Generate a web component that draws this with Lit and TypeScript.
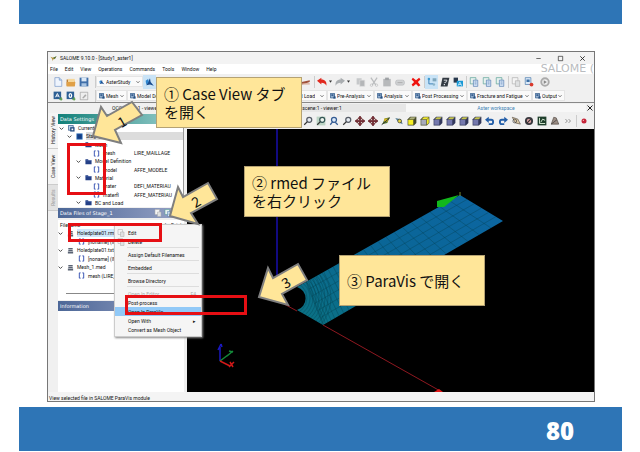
import { LitElement, html, svg, css } from "lit";
import { customElement } from "lit/decorators.js";
import { classMap } from "lit/directives/class-map.js";

const glyphs: Record<string, unknown> = {
  new: svg`<path d="M3 1h7l4 4v10H3z" fill="#eef4fd" stroke="#6c8fc4"/><path d="M10 1v4h4" fill="#bcd3f2" stroke="#6c8fc4"/>`,
  open: svg`<path d="M1 4h5l1 2h7v8H1z" fill="#b4742a"/><path d="M3 3h11v6H3z" fill="#f6d79a"/><path d="M1 8h14l-1 7H1z" fill="#e0a046"/>`,
  save: svg`<path d="M1 1h14v14H1z" fill="#3f6ea8"/><path d="M4 1h8v6H4z" fill="#dbe8f6"/><path d="M4 10h8v5H4z" fill="#a9c4e2"/>`,
  aster: svg`<path d="M2 13 8 2l1 6 5 6-6-2z" fill="#164b8f"/><path d="M1 6l4-3 1 5-4 4z" fill="#2f86cf"/>`,
  blob: svg`<circle cx="8" cy="8" r="6" fill="#8a8fa3"/><circle cx="8" cy="6" r="3" fill="#e9bd32"/>`,
  grid: svg`<path d="M1 1h14v14H1z" fill="#4d5e94"/><path d="M3 4h10M3 8h10M3 12h10" stroke="#dfe4f4" stroke-width="2"/>`,
  brown: svg`<path d="M1 8l13-3v3L2 12z" fill="#a1523a"/><path d="M2 10h12v2H2z" fill="#d8a894"/>`,
  undo: svg`<path d="M0 6l7-5v3c6 0 9 4 8 10-2-4-4-5-8-5v3z" fill="#e0281e"/>`,
  redo: svg`<path d="M16 6L9 1v3C3 4 0 8 1 14c2-4 4-5 8-5v3z" fill="#a9adb0"/>`,
  copy: svg`<path d="M1 2h8v10H1z" fill="#c6c8ca"/><path d="M6 5h8v10H6z" fill="#b4b6b8" stroke="#e2e2e2"/>`,
  cut: svg`<path d="M3 1l8 12M13 1L5 13" stroke="#babcbe" stroke-width="2"/><circle cx="4" cy="13" r="2" fill="none" stroke="#babcbe"/><circle cx="12" cy="13" r="2" fill="none" stroke="#babcbe"/>`,
  paste: svg`<path d="M2 3h12v12H2z" fill="#b7b9bb"/><path d="M5 1h6v4H5z" fill="#9fa2a5"/>`,
  pill: svg`<rect x="1" y="5" width="14" height="8" rx="3" fill="#d0d2d4" stroke="#b4b6b8"/><path d="M4 9h8" stroke="#999"/>`,
  del: svg`<path d="M3 1l5 4 5-4 2 3-4 4 4 5-3 2-4-4-5 4-2-3 4-4-4-4z" fill="#ee1410"/>`,
  tree: svg`<path d="M3 2v9h7" fill="none" stroke="#357db5" stroke-width="1.500"/><circle cx="3" cy="3" r="2" fill="#3c9ad0"/><path d="M9 2h6v5H9z" fill="#7fa7bd"/><circle cx="11" cy="12" r="2" fill="#8cb4c8"/>`,
  shade: svg`<path d="M4 1h11l-3 14H1z" fill="#333a42"/><path d="M6 5h5l-2 4H7" fill="none" stroke="#dfe3e6" stroke-width="1.500"/><path d="M6 11h2v2H6z" fill="#dfe3e6"/>`,
  lang: svg`<path d="M1 1h7v8H1z" fill="#28394d"/><path d="M6 6h10v9H6z" fill="#1999d6"/><path d="M8 14l3-6 3 6M9 12h4" stroke="#fff" fill="none"/>`,
  pageB: svg`<path d="M2 1h9v10H2z" fill="#e7f1ee" stroke="#4b9a8e"/><path d="M7 5h7v10H7z" fill="#d4e3f5" stroke="#4a74ab"/><path d="M9 8h3M9 11h3" stroke="#4a74ab"/>`,
  pageG: svg`<path d="M2 1h9v10H2z" fill="#f4f4f4" stroke="#aaa"/><path d="M7 6h7v9H7z" fill="#dfe1e2" stroke="#aaa"/>`,
  pageR: svg`<path d="M2 1h9v11H2z" fill="#dce9f7" stroke="#3a6ea5"/><path d="M4 4h5v4H4z" fill="#3a6ea5"/><circle cx="12" cy="12" r="3" fill="#d93a2d"/>`,
  play: svg`<circle cx="8" cy="8" r="6" fill="#eee" stroke="#aaa" stroke-width="3"/><path d="M6 5l5 3-5 3z" fill="#888"/>`,
  astA: svg`<path d="M1 1h12v12H1z" fill="#2d5f94"/><path d="M4 10l3-6 3 6M5 8h4" stroke="#fff" stroke-width="1.500" fill="none"/><path d="M13 10v5M10 13h5" stroke="#5a9b49" stroke-width="2"/>`,
  astO: svg`<path d="M1 1h12v12H1z" fill="#2d5f94"/><ellipse cx="7" cy="7" rx="2" ry="3" stroke="#fff" stroke-width="2" fill="none"/><path d="M13 10v5M10 13h5" stroke="#5a9b49" stroke-width="2"/>`,
  note: svg`<path d="M2 2h12v12H2z" fill="#eee" stroke="#999"/><path d="M5 11l5-6 2 2-5 5z" fill="#aaa"/>`,
  cmd: svg`<path d="M1 1h11v12H1z" fill="#b4cbe4" stroke="#244f80" stroke-width="2"/><path d="M4 4h5v3H4zM4 9h3" fill="#244f80" stroke="#244f80"/><path d="M9 9h6v6H9z" fill="#244f80"/>`,
  zoom: svg`<circle cx="10" cy="6" r="4" fill="#e8edf3" stroke="#555b66" stroke-width="2"/><path d="M7 9l-5 5" stroke="#333" stroke-width="2"/>`,
  zoomA: svg`<path d="M1 1h14v14H1z" fill="#bcd3c4"/><circle cx="10" cy="6" r="4" fill="#eef4ee" stroke="#355" stroke-width="2"/><path d="M7 9l-5 5" stroke="#333" stroke-width="2"/>`,
  zoomB: svg`<circle cx="8" cy="6" r="4" fill="#dae8f8" stroke="#345b93" stroke-width="2"/><path d="M6 9l-4 5M10 10l4 4" stroke="#345b93" stroke-width="2"/>`,
  move: svg`<path d="M8 0l3 4H9v3h3V5l4 3-4 3V9H9v3h2l-3 4-3-4h2V9H4v2L0 8l4-3v2h3V4H5z" fill="#7d2e3d" stroke="#511"/>`,
  rot: svg`<path d="M2 13l4-9 8-2-4 9z" fill="#4c702c"/><path d="M5 4h6v5H5z" fill="#d1b528"/><path d="M1 14l13-11" stroke="#333" stroke-width="1.500"/>`,
  rot2: svg`<path d="M2 3l9 2 3 8-7-3z" fill="#547d92"/><circle cx="9" cy="8" r="3" fill="#e6d544" stroke="#333"/>`,
  cubeY: svg`<path d="M1 5l4-4h10v10l-4 4H1z" fill="#454a2c"/><path d="M2 6h8v8H2z" fill="#f7ef25"/><path d="M3 5l3-3h8l-3 3z" fill="#aeb07c"/>`,
  cubeT: svg`<path d="M1 5l4-4h10v10l-4 4H1z" fill="#4e5230"/><path d="M2 6h8v8H2z" fill="#a6a9bc"/><path d="M3 5l3-3h8l-3 3zM11 6l3-3v8l-3 3z" fill="#efe72e"/>`,
  cubeB: svg`<path d="M1 5l4-4h10v10l-4 4H1z" fill="#33385c"/><path d="M2 6h8v8H2z" fill="#7478ad"/><path d="M3 5l3-3h8l-3 3z" fill="#c5c34e"/>`,
  ccw: svg`<path d="M5 6h5c4 0 4 7 0 7H6" fill="none" stroke="#235ea8" stroke-width="3"/><path d="M6 1v10L0 6z" fill="#235ea8"/>`,
  cw: svg`<path d="M11 6H6c-4 0-4 7 0 7h4" fill="none" stroke="#235ea8" stroke-width="3"/><path d="M10 1v10l6-5z" fill="#235ea8"/>`,
  clip: svg`<path d="M2 2l9 3 4 8-8-2z" fill="#d6c5a5" stroke="#554b40"/><circle cx="6" cy="8" r="3" fill="none" stroke="#333"/>`,
  gear: svg`<circle cx="8" cy="8" r="5" fill="#e0a5a5" stroke="#38383e" stroke-width="3"/><path d="M5 11l6-6" stroke="#333" stroke-width="2"/>`,
  graph: svg`<path d="M1 1h14v14H1z" fill="#1f3f2c"/><path d="M4 3v9h9M6 10l3-5 4 2" stroke="#d8ecd4" fill="none" stroke-width="1.500"/>`,
  cone: svg`<path d="M6 2l4 1 4 10H2z" fill="#9b8d85" stroke="#49413c"/><path d="M2 13l9-7" stroke="#333"/>`,
  dot: svg`<circle cx="8" cy="8" r="4" fill="#c6263a"/><circle cx="7" cy="7" r="1" fill="#f4b4b4"/>`,
  more: svg`<path d="M4 5l3 3-3 3M9 5l3 3-3 3" fill="none" stroke="#888" stroke-width="1.500"/>`,
  chev: svg`<path d="M2 5l6 6 6-6" fill="none" stroke="#444" stroke-width="3"/>`,
  tri: svg`<path d="M3 5h10l-5 7z" fill="#333"/>`,
  folder: svg`<path d="M1 3h6l1 2h7v9H1z" fill="#233f86"/><path d="M1 6h14" stroke="#5573b8"/>`,
  stage: svg`<path d="M1 1h14v14H1z" fill="#2467b4"/><path d="M3 3h10v10H3z" fill="#153d83"/>`,
  cases: svg`<path d="M1 1h11v11H1z" fill="#bdd2ea" stroke="#254d82" stroke-width="1.500"/><path d="M5 5h10v10H5z" fill="#254d82"/><path d="M8 8h4v4H8z" fill="#fff"/>`,
  brace: svg`<path d="M6 2H3v12h3M10 2h3v12h-3" fill="none" stroke="#2745ad" stroke-width="2"/>`,
  file: svg`<path d="M3 2h10v3H3zM3 6h10v3H3zM2 10h12v5H2z" fill="#596273"/>`,
  min: svg`<path d="M3 8h10" stroke="#222" stroke-width="1.500"/>`,
  max: svg`<path d="M3 3h10v10H3z" fill="none" stroke="#222" stroke-width="1.500"/>`,
  close: svg`<path d="M3 3l10 10M13 3L3 13" stroke="#222" stroke-width="2"/>`,
  logo: svg`<path d="M1 4l6 2 8-3-4 6-4 1-1 4-1-5z" fill="#b29039"/><path d="M7 6l8-3-4 6z" fill="#4e7544"/>`,
  none: svg``,
};

const icon = (name: string) =>
  html`<svg class="icon" viewBox="0 0 16 16" aria-hidden="true">${glyphs[name]}</svg>`;

const mainTools =
  "grid none none blob none grid blob open blob none graph brown | undo tri redo tri / copy cut paste pill / del | *tree shade lang | pageB pageB pageB | pageG pageR / play".split(" ");
const viewTools =
  "zoom zoom zoom move rot zoom zoom zoom zoom zoomA zoomB zoom move move rot rot2 cubeY cubeT cubeB cubeB cubeB cubeB ccw cw clip gear graph cone more | dot".split(" ");

const tool = (name: string) => {
  if (name === "|" || name === "/") return html`<span class=${classMap({ sep: true, line: name === "|" })}></span>`;
  const on = name.startsWith("*");
  const id = on ? name.slice(1) : name;
  return html`<button class=${classMap({ tool: true, on, thin: id === "tri" })} aria-label=${id}>${icon(id)}</button>`;
};

const combos = [
  ["Mesh", "c30"], ["Model Definition", "c62"], ["Material", "c62"], ["BC and Load", "c76 end"],
  ["Pre-Analysis", "c47"], ["Analysis", "c38"], ["Post Processing", "c55"],
  ["Fracture and Fatigue", "c65"], ["Output", "c33"],
];

const combo = (label: string, size: string, glyph = "cmd") => html`
  <label class="combo ${size}">${icon(glyph)}
    <select aria-label=${label}><option>${label}</option></select>
    ${icon("chev")}
  </label>`;

const settings: [number, string, string, string][] = [
  [0, "cases", "CurrentCase", ""],
  [1, "stage", "Stage_1", ""],
  [2, "folder", "Mesh", ""],
  [3, "brace", "mesh", "LIRE_MAILLAGE"],
  [2, "folder", "Model Definition", ""],
  [3, "brace", "model", "AFFE_MODELE"],
  [2, "folder", "Material", ""],
  [3, "brace", "mater", "DEFI_MATERIAU"],
  [3, "brace", "materfl", "AFFE_MATERIAU"],
  [2, "folder", "BC and Load", ""],
];

const files: [boolean, string][] = [
  [false, "Holedplate01.rmed"],
  [true, "[noname] (IMPR_RESU)"],
  [false, "Holedplate01.txt"],
  [true, "[noname] (IMPR_RESU)"],
  [false, "Mesh_1.med"],
  [true, "mesh (LIRE_MAILLAGE)"],
];

const meshLines = () => {
  const out: unknown[] = [];
  // across the strip, denser towards the hole
  for (let i = 0; i < 25; i++) {
    const t = Math.pow(i / 25, 1.7);
    out.push(svg`<path d="M${306 + 154 * t} ${281 - 87 * t}L${323 + 180 * t} ${324 - 104 * t}"/>`);
  }
  for (let i = 1; i < 6; i++) {
    const t = i / 6;
    out.push(svg`<path d="M${306 + 17 * t} ${281 + 43 * t}L${460 + 43 * t} ${194 + 26 * t}"/>`);
  }
  for (let r = 16; r < 42; r += 3) out.push(svg`<circle cx="291" cy="297" r=${r}/>`);
  return out;
};

@customElement("app-root")
export class AppRoot extends LitElement {
  static styles = css`
    :host { display: flex; flex-direction: column; min-height: 100vh; background: #fff; color: #111;
      font: 5px/8px "Roboto", "Liberation Sans", sans-serif; }
    * { box-sizing: border-box; }
    button, select { font: inherit; color: inherit; border: 0; padding: 0; margin: 0; background: none; }
    .band { background: #2e75b6; margin: 0 18px 0 19px; }
    .top { height: 24px; }
    .bottom { height: 44px; margin-bottom: 1px; padding: 4px 48px 0 0; display: flex; align-items: center;
      justify-content: flex-end; color: #fff; font: 800 24px/32px "Open Sans", "Noto Sans", sans-serif; }
    .shot { position: relative; flex: 1; display: flex; margin: 27px 45px 5px 47px; }
    .app { flex: 1; min-width: 0; display: flex; flex-direction: column; border: 1px solid #777; background: #f0f0f0; overflow: hidden; }
    .icon { width: 10px; height: 10px; flex: none; display: block; }
    .title { height: 12px; display: flex; align-items: center; gap: 3px; padding: 0 2px; background: #f3f3f3; }
    .title .icon { width: 7px; height: 7px; }
    .title .name { flex: 1; }
    .title button { width: 19px; display: grid; place-items: center; }
    .menus { height: 10px; display: flex; align-items: center; gap: 7px; padding-left: 2px; background: #fff; }
    .brand { margin-left: auto; color: #b9bcc0; white-space: pre; font: 11px/10px "DejaVu Sans", sans-serif; }
    .bar { display: flex; align-items: center; overflow: hidden; flex: none; }
    .main-bar { height: 15px; padding-left: 3px; }
    .cmd-bar { height: 14px; padding-left: 3px; border-bottom: 1px solid #888; }
    .view-bar { height: 16px; padding-left: 10px; }
    .view-bar .spring { flex: 1; }
    .tool { width: 13px; height: 14px; flex: none; display: grid; place-items: center; }
    .tool.thin { width: 5px; }
    .tool.thin .icon { width: 5px; height: 5px; }
    .tool.on { background: #c9e3f6; }
    .sep { width: 3px; height: 12px; flex: none; }
    .sep.line { border-right: 1px solid #ccc; }
    .sep.wide { width: 6px; }
    .combo { display: flex; align-items: center; gap: 1px; flex: none; height: 11px; padding: 0 2px; background: #fafafa; border: 1px solid #e4e4e4; }
    .combo select { appearance: none; flex: 1; min-width: 0; height: 8px; }
    .combo .icon { width: 6px; height: 6px; }
    .combo .icon:last-child { width: 4px; height: 4px; }
    .combo.end select { text-align: right; text-align-last: right; padding-right: 4px; }
    .c30 { width: 31px; } .c62 { width: 62px; } .c76 { width: 76px; } .c47 { width: 47px; } .c38 { width: 38px; }
    .c55 { width: 55px; } .c65 { width: 65px; } .c33 { width: 33px; }
    .tabs { height: 10px; flex: none; display: grid; grid-template-columns: 206px 142px 1fr 8px; align-items: center; padding-left: 10px; }
    .tabs span { overflow: hidden; white-space: nowrap; }
    .tabs .a { padding-left: 54px; }
    .tabs .b { padding-left: 27px; background: #e6e6e6; }
    .tabs .c { background: #f7f7f7; color: #3c82b5; text-align: center; }
    .tabs .icon { width: 8px; height: 8px; }
    .main { flex: 1; min-height: 0; display: flex; }
    .rail { width: 10px; display: flex; flex-direction: column; }
    .rail button { writing-mode: vertical-rl; transform: rotate(180deg); width: 10px; height: 36px; text-align: center; white-space: nowrap; background: #f4f4f4; border-top: 1px solid #ccc; }
    .rail .off { height: 26px; color: #999; background: #e2e2e2; }
    .dock { width: 129px; flex: none; display: flex; flex-direction: column; padding-right: 3px; }
    .head { height: 10px; flex: none; display: flex; align-items: center; padding-left: 2px; color: #fff; font: 5px/8px "DejaVu Sans", sans-serif; margin-top: 1px; }
    .head .icon { width: 8px; height: 8px; margin-right: 2px; }
    .head .fill { flex: 1; }
    .teal { background: linear-gradient(90deg, #128079, #9fd0cf); }
    .blue { background: linear-gradient(90deg, #4c6797, #98a3c6); }
    .tree { height: 83px; flex: none; background: #fff; overflow: hidden; border-right: 1px solid #999; display: grid; grid-auto-rows: 1fr; }
    .row { display: flex; align-items: center; gap: 3px; min-height: 0; white-space: nowrap; overflow: hidden; }
    .row .icon { width: 7px; height: 7px; }
    .row .chev .icon { width: 5px; height: 5px; }
    .chev { width: 6px; flex: none; }
    .row .cmd { margin-left: auto; width: 49px; }
    .i0 { padding-left: 1px; } .i1 { padding-left: 9px; } .i2 { padding-left: 18px; } .i3 { padding-left: 26px; }
    .i1 .label { background: #dcdcdc; flex: 1; }
    .files { flex: none; height: 80px; background: #fff; margin-top: 2px; }
    .files table { width: 100%; border-collapse: collapse; table-layout: fixed; }
    .files th { font-weight: normal; text-align: left; padding: 0 0 0 2px; height: 9px; }
    .files th:first-child { width: 81px; }
    .files td { padding: 0; height: 8px; }
    .files .sub { padding-left: 20px; }
    .files tr:nth-child(even) td { height: 9px; }
    .files tr.sel .label { background: #cfe8fb; flex: 1; }
    .hbar { width: 92px; height: 1px; background: #888; margin: 13px 0 0 8px; }
    .info { flex: 1; background: #fff; }
    .views { flex: 1; min-width: 0; display: flex; flex-direction: column; }
    .scene { flex: 1; min-height: 0; background: #000; overflow: hidden; }
    .scene svg { display: block; width: 100%; height: 100%; }
    .status { height: 9px; flex: none; padding: 3px 1px 0; line-height: 6px; background: #f4f4f4; }
    .over { position: absolute; }
    .marks { left: 0; top: 0; width: 548px; height: 351px; pointer-events: none; overflow: visible; }
    .digit { font: 14px "Noto Sans CJK JP", sans-serif; fill: #111; text-anchor: middle; }
    .note { width: 146px; height: 51px; padding: 6px 7px; background: #ffe699; border: 1px solid #b5a273; color: #111;
      font: 15px/18px "Noto Sans CJK JP", sans-serif; margin: 0; display: flex; align-items: center; }
    .n1 { left: 109px; top: 26px; } .n2 { left: 197px; top: 115px; } .n3 { left: 292px; top: 204px; }
    .menu { left: 67px; top: 173px; width: 88px; padding: 3px 0 2px; background: #f5f5f5; border: 1px solid #ccc; box-shadow: 1px 1px 2px #888; display: flex; flex-direction: column; }
    .menu button { height: 9px; display: flex; align-items: center; text-align: left; padding: 0 5px 0 2px; gap: 3px; }
    .menu button span { flex: 1; }
    .menu .icon { width: 8px; height: 8px; }
    .menu .hot { background: #91c9f7; }
    .menu .dim { color: #aaa; }
    .menu hr { width: 72px; border: 0; border-top: 1px solid #ddd; margin: 1px 2px 2px auto; }
    .red { border: 3px solid #e60f14; }
    .r1 { left: 20px; top: 92px; width: 39px; height: 52px; }
    .r2 { left: 21px; top: 172px; width: 94px; height: 19px; }
    .r3 { left: 78px; top: 244px; width: 122px; height: 20px; }
  `;

  render() {
    return html`
      <header class="band top"></header>
      <main class="shot">
        <section class="app">
          <div class="title">${icon("logo")}<span class="name">SALOME 9.10.0 - [Study1_aster1]</span>
            <button aria-label="Minimize">${icon("min")}</button><button aria-label="Maximize">${icon("max")}</button><button aria-label="Close">${icon("close")}</button>
          </div>
          <nav class="menus">
            ${["File", "Edit", "View", "Operations", "Commands", "Tools", "Window", "Help"].map((m) => html`<button>${m}</button>`)}
            <span class="brand">SALOME (</span>
          </nav>
          <div class="bar main-bar">
            ${["new", "open", "save"].map(tool)}<span class="sep line wide"></span>
            ${combo("AsterStudy", "c47", "aster")}
            ${tool("*aster")}${mainTools.map(tool)}
          </div>
          <div class="bar cmd-bar">
            ${["astA", "astO", "note"].map(tool)}<span class="sep line wide"></span>
            ${combos.map(([l, s]) => combo(l, s))}
          </div>
          <div class="tabs"><span class="a">OCC scene:1 - viewer:1</span><span class="b">OCC scene:1 - viewer:1</span><span class="c">Aster workspace</span>${icon("close")}</div>
          <div class="main">
            <div class="rail"><button>History View</button><button>Case View</button><button class="off">Results</button></div>
            <aside class="dock">
              <div class="head teal">Data Settings</div>
              <div class="tree">
                ${settings.map(([lvl, ic, name, cmd]) => html`
                  <div class="row i${lvl}"><span class="chev">${lvl < 3 ? icon("chev") : ""}</span>${icon(ic)}<span class="label">${name}</span>${cmd ? html`<span class="cmd">${cmd}</span>` : ""}</div>`)}
              </div>
              <div class="head blue"><span class="fill">Data Files of Stage_1</span>${icon("pageG")}${icon("pageB")}${icon("pageG")}</div>
              <div class="files">
                <table>
                  <thead><tr><th>Filename</th><th>Unit</th><th>Mode</th><th>Exists</th></tr></thead>
                  <tbody>
                    ${files.map(([sub, name], i) => html`
                      <tr class=${classMap({ sel: i === 0 })}><td colspan="4"><div class=${classMap({ row: true, sub })}>
                        ${sub ? "" : html`<span class="chev">${icon("chev")}</span>`}${icon(sub ? "brace" : "file")}<span class="label">${name}</span></div></td></tr>`)}
                  </tbody>
                </table>
                <div class="hbar"></div>
              </div>
              <div class="head blue">Information</div>
              <div class="info"></div>
            </aside>
            <div class="views">
              <div class="bar view-bar">${viewTools.map(tool)}<span class="spring"></span>${tool("more")}</div>
              <div class="scene">
                <svg viewBox="187 128 407 263" preserveAspectRatio="xMinYMin slice" role="img" aria-label="Mesh in 3D view">
                  <defs>
                    <linearGradient id="sea" x1="0" y1="1" x2="1" y2="0"><stop offset="0" stop-color="#0b7480"/><stop offset="0.5" stop-color="#0a6696"/><stop offset="1" stop-color="#0d66a4"/></linearGradient>
                    <clipPath id="strip"><path d="M297 286L460 194L503 220L323 324L297 309A12 12 0 0 0 297 286Z"/></clipPath>
                  </defs>
                  <path d="M277 128V275" stroke="#120a80" stroke-width="2"/>
                  <g clip-path="url(#strip)"><path d="M280 190h230v140H280z" fill="url(#sea)"/>
                    <g fill="none" stroke="#06404c" stroke-opacity="0.700" stroke-width="0.500">${meshLines()}</g></g>
                  <path d="M284 303L297 310M323 324L442 391" stroke="#8e1820" stroke-width="1"/>
                  <path d="M437 200L459 194L444 206L437 206Z" fill="#12b81c"/><path d="M460 191v4" stroke="#7a8c32"/>
                  <path d="M434 391l5-3 4 3z" fill="#e01818"/>
                  <path d="M220 360V346M218 349l3-6M221 343l1 3" stroke="#1a18c0" fill="none" stroke-width="1.500"/>
                  <path d="M220 360L228 354M227 355l6-5M229 350l4 1" stroke="#138a3a" fill="none" stroke-width="1.500"/>
                  <path d="M220 360L230 365M230 361l3 5M234 361l-5 5" stroke="#d01818" fill="none" stroke-width="1.500"/>
                </svg>
              </div>
            </div>
          </div>
          <footer class="status">View selected file in SALOME ParaVis module</footer>
        </section>

        <div class="over menu" role="menu">
          <button role="menuitem">${icon("pageG")}<span>Edit</span></button>
          <button role="menuitem">${icon("pageG")}<span>Delete</span></button><hr />
          <button role="menuitem">${icon("none")}<span>Assign Default Filenames</span></button><hr />
          <button role="menuitem">${icon("none")}<span>Embedded</span></button><hr />
          <button role="menuitem">${icon("none")}<span>Browse Directory</span></button><hr />
          <button role="menuitem" class="dim">${icon("none")}<span>Open In Editor</span>F4</button>
          <button role="menuitem">${icon("none")}<span>Post-process</span></button>
          <button role="menuitem" class="hot">${icon("none")}<span>Open In ParaVis</span></button>
          <button role="menuitem">${icon("none")}<span>Open With</span>▸</button>
          <button role="menuitem">${icon("none")}<span>Convert as Mesh Object</span></button>
        </div>
        <div class="over red r1"></div>
        <div class="over red r2"></div>
        <div class="over red r3"></div>
        <svg class="over marks" viewBox="47 51 548 351">
          <g fill="#ffe699" stroke="#7f7f7f" stroke-width="2">
            <path d="M93 136L101 107L107 116L132 102L142 115L115 130L121 143Z"/>
            <path d="M170 216L178 187L183 197L208 183L217 199L191 213L198 224Z"/>
            <path d="M259 297L268 268L273 278L298 264L307 280L282 294L288 305Z"/>
          </g>
          <text class="digit" x="122" y="127" transform="rotate(-30 122 122)">1</text>
          <text class="digit" x="196" y="207" transform="rotate(-30 196 202)">2</text>
          <text class="digit" x="286" y="288" transform="rotate(-30 286 283)">3</text>
        </svg>
        <p class="over note n1">① Case View タブを開く</p>
        <p class="over note n2">② rmed ファイルを右クリック</p>
        <p class="over note n3">③ ParaVis で開く</p>
      </main>
      <footer class="band bottom">80</footer>
    `;
  }
}
